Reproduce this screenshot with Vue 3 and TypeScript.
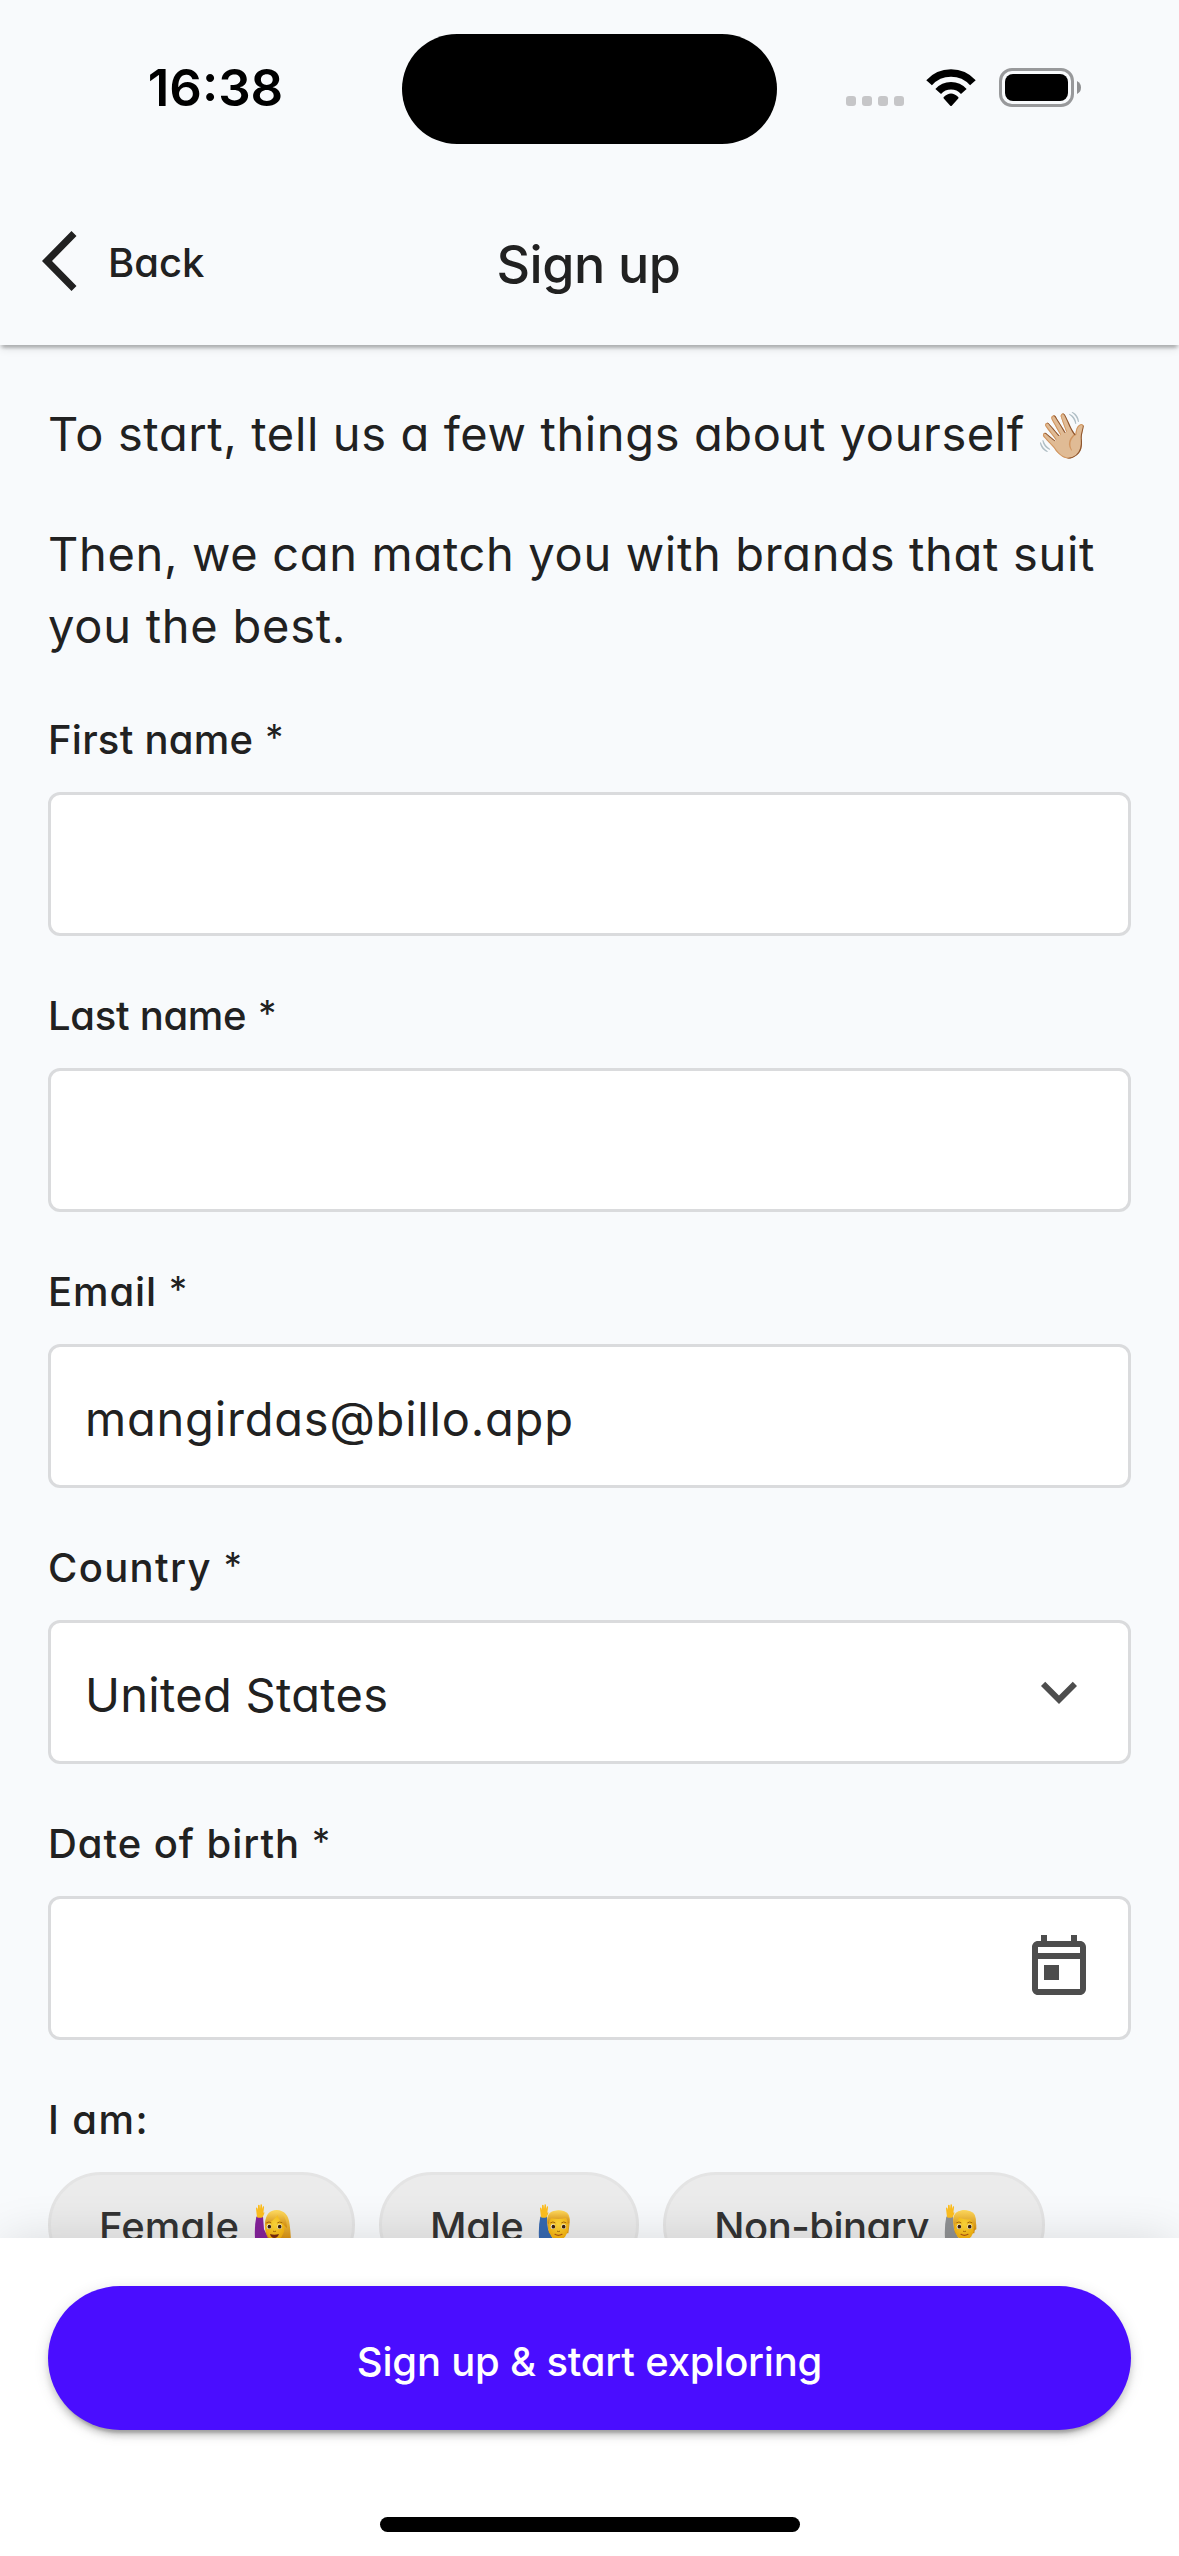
<script setup lang="ts">
interface Field {
  label: string
  value: string
  tracking: number
  valueTracking?: number
  icon?: 'chevron' | 'calendar'
}

interface Choice {
  label: string
  tracking: number
  kind: 'woman' | 'man' | 'person'
  sleeve: string
}

const fields: Field[] = [
  { label: 'First name', value: '', tracking: 0.25 },
  { label: 'Last name', value: '', tracking: -0.3 },
  { label: 'Email', value: 'mangirdas@billo.app', tracking: 0.9, valueTracking: 0.8 },
  { label: 'Country', value: 'United States', tracking: 1.35, valueTracking: 0.3, icon: 'chevron' },
  { label: 'Date of birth', value: '', tracking: 0.95, icon: 'calendar' },
]

const choices: Choice[] = [
  { label: 'Female', tracking: 0.1, kind: 'woman', sleeve: '#84229a' },
  { label: 'Male', tracking: -0.4, kind: 'man', sleeve: '#3768b0' },
  { label: 'Non-binary', tracking: -0.5, kind: 'person', sleeve: '#8f9193' },
]
</script>

<template>
  <div class="screen">
    <div class="top">
      <div class="status">
        <div class="time">16:38</div>
        <div class="island"></div>
        <div class="indicators">
          <svg class="dots" width="58" height="10" viewBox="0 0 58 10" fill="#c6c6c8">
            <rect width="10" height="10" rx="3" />
            <rect x="16" width="10" height="10" rx="3" />
            <rect x="32" width="10" height="10" rx="3" />
            <rect x="48" width="10" height="10" rx="3" />
          </svg>
          <svg class="wifi" width="50" height="38" viewBox="0 0 50 38" fill="none" stroke="#000">
            <path d="M3.1 13.8A29.5 29.5 0 0 1 46.9 13.8" stroke-width="7.6" />
            <path d="M12.2 22.5A17.2 17.2 0 0 1 37.8 22.5" stroke-width="7.6" />
            <path d="M25 36L18.5 28.8Q25 22 31.5 28.8Z" fill="#000" stroke-width="2" stroke-linejoin="round" />
          </svg>
          <svg class="battery" width="82" height="39" viewBox="0 0 82 39">
            <rect x="1.5" y="1.5" width="72" height="36" rx="11.5" fill="none" stroke="#98999b" stroke-width="3" />
            <rect x="6" y="6" width="63" height="27" rx="8" />
            <path d="M78 13Q82 15 82 19.5T78 26Z" fill="#8f9092" />
          </svg>
        </div>
      </div>
      <header class="nav">
        <div class="back">
          <svg width="35" height="60" viewBox="0 0 35 60" fill="#212121">
            <path d="M0 30L29.5 0L34.5 5L10 30L34.5 55L29.5 60Z" />
          </svg>
          <span>Back</span>
        </div>
        <h1>Sign up</h1>
      </header>
    </div>

    <main class="content">
      <p class="lead">To start, tell us a few things about yourself <span class="wave">👋🏼</span></p>
      <p class="lead second">Then, we can match you with brands that suit<br /><span class="closing">you the best.</span></p>

      <div class="form">
        <div v-for="f in fields" :key="f.label" class="field">
          <label :style="{ letterSpacing: f.tracking + 'px' }">{{ f.label }}<span class="star">*</span></label>
          <div class="input">
            <span class="value" :style="{ letterSpacing: (f.valueTracking ?? 0) + 'px' }">{{ f.value }}</span>
            <svg v-if="f.icon === 'chevron'" class="icon" width="72" height="72" viewBox="0 0 24 24">
              <path d="M7.41 8.59L12 13.17l4.59-4.58L18 10l-6 6-6-6z" />
            </svg>
            <svg v-if="f.icon === 'calendar'" class="icon lifted" width="72" height="72" viewBox="0 0 24 24">
              <path d="M19 4h-1V2h-2v2H8V2H6v2H5c-1.11 0-2 .9-2 2v14c0 1.1.89 2 2 2h14c1.1 0 2-.9 2-2V6c0-1.1-.9-2-2-2zm0 16H5V10h14v10zm0-12H5V6h14v2zM7 12h5v5H7z" />
            </svg>
          </div>
        </div>

        <div class="field">
          <label class="group-label">I am:</label>
          <div class="chips">
            <div v-for="c in choices" :key="c.label" class="chip">
              <span :style="{ letterSpacing: c.tracking + 'px' }">{{ c.label }}</span>
              <svg class="avatar" width="42" height="42" viewBox="0 0 126 126">
                <defs>
                  <radialGradient :id="'skin-' + c.kind" cx=".5" cy=".4" r=".6">
                    <stop offset="0" stop-color="#ffd83a" />
                    <stop offset="1" stop-color="#f5b00c" />
                  </radialGradient>
                  <linearGradient :id="'hair-' + c.kind" x1="0" y1="0" x2="0" y2="1">
                    <stop offset="0" stop-color="#ffd95c" />
                    <stop offset="1" stop-color="#d48a0c" />
                  </linearGradient>
                </defs>
                <path :fill="c.sleeve" d="M10 38Q20 34 30 38L33 76L48 104L70 104V126H8Q2 74 10 38Z" />
                <path fill="#fdbe20" d="M12 40L9 14Q9 8 13 12L15 18L15 4Q17 0 20 4L21 14L23 1Q27-1 27 4L27 15L30 7Q34 5 33 11L31 26Q35 22 34 28L29 40Q20 43 12 40Z" />
                <path v-if="c.kind === 'woman'" :fill="`url(#hair-${c.kind})`" d="M36 60Q38 18 71 18Q106 20 110 62Q113 84 114 112H86L50 110Q34 90 36 60Z" />
                <path v-else :fill="`url(#hair-${c.kind})`" d="M31 60Q26 24 54 20Q68 16 82 22Q102 28 98 58L94 88H36Z" />
                <ellipse :cx="c.kind === 'woman' ? 66 : 64" cy="69" :rx="c.kind === 'woman' ? 29 : 30" ry="39" :fill="`url(#skin-${c.kind})`" />
                <path v-if="c.kind === 'woman'" :fill="`url(#hair-${c.kind})`" d="M36 62Q38 24 70 22Q100 26 102 72Q84 58 73 34Q60 54 36 62Z" />
                <path v-else-if="c.kind === 'man'" :fill="`url(#hair-${c.kind})`" d="M32 58Q28 24 60 20Q98 18 97 56L92 60Q92 46 86 42Q66 48 42 43Q36 50 36 60Z" />
                <path v-else :fill="`url(#hair-${c.kind})`" d="M32 58Q28 24 60 18Q102 20 100 76L92 80Q94 56 82 46Q58 48 48 38Q46 52 34 62Z" />
                <g fill="#fff">
                  <circle cx="48" cy="68" r="7" />
                  <circle cx="80" cy="68" r="7" />
                </g>
                <g fill="#3e2208">
                  <circle cx="49" cy="68" r="5.5" />
                  <circle cx="80" cy="68" r="5.5" />
                </g>
                <path v-if="c.kind === 'woman'" fill="#7a2b12" d="M51 90Q64 94 78 90Q74 102 64 102T51 90Z" />
                <path v-else fill="none" stroke="#b05512" stroke-width="3.5" stroke-linecap="round" d="M54 91Q64 97 75 91" />
                <path fill="none" stroke="#a86a0a" stroke-width="3" stroke-linecap="round" d="M41 56Q48 51 54 56M74 56Q80 51 87 56M61 82Q64 84 68 82" />
              </svg>
            </div>
          </div>
        </div>
      </div>
    </main>

    <footer class="footer">
      <button class="cta" type="button">Sign up &amp; start exploring</button>
      <div class="home"></div>
    </footer>
  </div>
</template>

<style>
body {
  margin: 0;
  overflow: hidden;
}
</style>

<style scoped>
.screen {
  width: 1179px;
  height: 2556px;
  display: flex;
  flex-direction: column;
  overflow: hidden;
  background: #f8fafc;
  color: #212121;
  font-family: Inter, 'Noto Sans', sans-serif;
  font-feature-settings: 'cv11' 1;
  white-space: nowrap;
}

.top {
  flex: none;
  height: 345px;
  background: #f8fafc;
  box-shadow:
    0 6px 3px -3px rgba(0, 0, 0, 0.14),
    0 3px 3px rgba(0, 0, 0, 0.1),
    0 3px 9px rgba(0, 0, 0, 0.12);
}

.status {
  height: 177px;
  display: grid;
  grid-template-columns: 402px 375px 402px;
  align-items: center;
}

.time {
  padding: 0 0 1px 29px;
  color: #000;
  font-size: 51px;
  font-weight: 600;
  line-height: 60px;
  text-align: center;
}

.island {
  height: 110px;
  border-radius: 55px;
  background: #000;
}

.indicators {
  display: flex;
  align-items: center;
  padding: 0 0 2px 69px;
}

.dots {
  margin-top: 27px;
}

.wifi {
  margin: 0 23px 0 22px;
}

.nav {
  height: 168px;
  display: grid;
  grid-template-columns: 1fr auto 1fr;
  align-items: center;
}

.back {
  display: flex;
  align-items: center;
  gap: 31px;
  padding-left: 42px;
  font-size: 40px;
  font-weight: 500;
  letter-spacing: 0;
  line-height: 60px;
}

.back span {
  padding-top: 3px;
}

h1 {
  margin: 7px 2px 0 0;
  font-size: 52px;
  font-weight: 500;
  letter-spacing: -0.5px;
  line-height: 72px;
}

.content {
  flex: 1;
  min-height: 0;
  overflow: hidden;
  margin-top: 12px;
  padding: 41px 48px 0;
}

.lead {
  margin: 0;
  height: 72px;
  font-size: 47px;
  line-height: 72px;
  letter-spacing: 0.62px;
}

.lead.second {
  height: 144px;
  margin-top: 48px;
  letter-spacing: 0.67px;
}

.closing {
  letter-spacing: 0.75px;
}

.wave {
  margin-left: -4px;
  font-size: 45px;
  line-height: 1;
}

.form {
  margin-top: 46px;
  display: flex;
  flex-direction: column;
  gap: 48px;
}

label {
  display: flex;
  height: 60px;
  font-size: 40px;
  font-weight: 500;
  line-height: 63px;
}

.star {
  margin-left: 12px;
  font-size: 36px;
  font-weight: 400;
  line-height: 58px;
}

.group-label {
  letter-spacing: 1.4px;
}

.input {
  box-sizing: border-box;
  height: 144px;
  margin-top: 24px;
  padding: 0 33px 0 34px;
  display: flex;
  align-items: center;
  justify-content: space-between;
  border: 3px solid #dadbdd;
  border-radius: 12px;
  background: #fff;
}

.value {
  padding-top: 5px;
  font-size: 47px;
  line-height: 72px;
}

.icon {
  fill: #4d4d4d;
}

.lifted {
  margin-bottom: 6px;
}

.chips {
  margin-top: 24px;
  display: flex;
  gap: 24px;
}

.chip {
  box-sizing: border-box;
  height: 106px;
  padding: 0 57px 0 48px;
  display: flex;
  align-items: center;
  border: 3px solid #e4e4e4;
  border-radius: 53px;
  background: #ebebeb;
  color: #333;
  font-size: 40px;
  font-weight: 500;
}

.chip span {
  padding-top: 2px;
}

.avatar {
  margin-left: 14px;
}

.footer {
  flex: none;
  position: relative;
  height: 318px;
  box-sizing: border-box;
  padding: 48px 48px 0;
  display: flex;
  flex-direction: column;
  align-items: center;
  background: #fff;
  box-shadow: 0 0 48px -6px rgba(0, 0, 0, 0.16);
}

.cta {
  width: 100%;
  height: 144px;
  padding: 8px 0 0;
  border: 0;
  border-radius: 72px;
  background: #4a0dff;
  color: #fff;
  font: 500 40px/60px Inter, 'Noto Sans', sans-serif;
  font-feature-settings: 'cv11' 1;
  letter-spacing: -0.2px;
  box-shadow:
    0 9px 3px -6px rgba(0, 0, 0, 0.2),
    0 6px 6px rgba(0, 0, 0, 0.14),
    0 3px 15px rgba(0, 0, 0, 0.12);
}

.home {
  width: 420px;
  height: 15px;
  margin-top: 87px;
  border-radius: 8px;
  background: #000;
}
</style>
